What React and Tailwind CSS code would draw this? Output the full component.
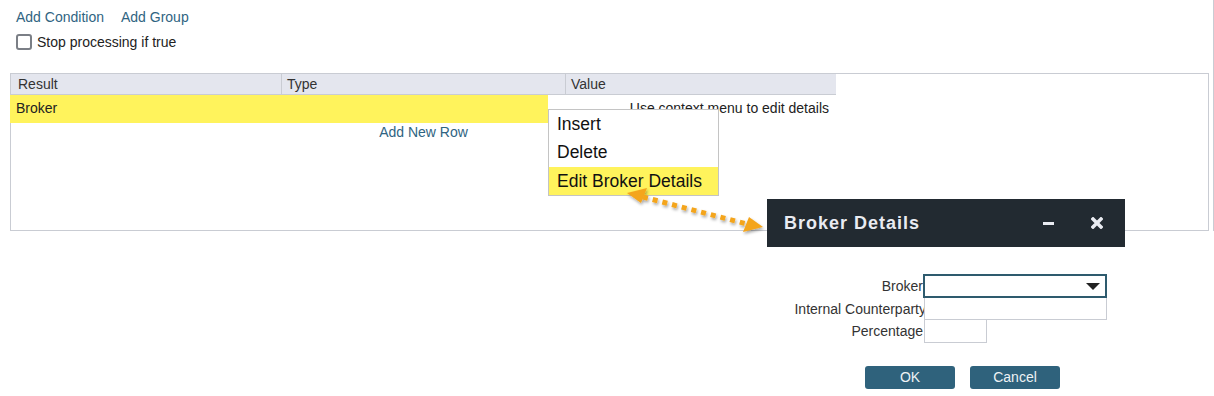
import React from 'react';

const Arrow = () => (
    <svg className="absolute left-0 top-0 pointer-events-none" width="1214" height="396">
        <defs>
            <filter id="sh" x="-20%" y="-50%" width="140%" height="200%">
                <feDropShadow dx="1" dy="2" stdDeviation="1.5" floodColor="#000" floodOpacity="0.35" />
            </filter>
        </defs>
        <g filter="url(#sh)">
            <line x1="643" y1="197" x2="747" y2="224" stroke="#f4a51c" strokeWidth="5" strokeDasharray="5 5" />
            <polygon points="627,193 647,188 641,203" fill="#f4a51c" />
            <polygon points="763,227 743,232 749,217" fill="#f4a51c" />
        </g>
    </svg>
);

const App = () => {
    return (
        <div className="relative w-[1214px] h-[396px] bg-white overflow-hidden font-['Liberation_Sans',Arial,sans-serif] text-[14px] text-[#333]">
            {/*============== rule panel ========= */}
            <div className="h-[231px] border-r border-[#c9ccd3] pt-[9px]">
                <div className="flex gap-[17px] pl-[16px] leading-[17px] text-[#2f6482]">
                    <span>Add Condition</span>
                    <span>Add Group</span>
                </div>
                <div className="flex items-center pl-[16px] mt-[8px] h-[16px]">
                    <div className="w-[16px] h-[16px] border-2 border-[#7b7f86] rounded-[3px]"></div>
                    <span className="ml-[5px] text-[#222]">Stop processing if true</span>
                </div>

                {/* grid box */}
                <div className="ml-[10px] mt-[23px] w-[1199px] h-[158px] border border-[#c9ccd3]">
                    <div className="flex w-[825px] h-[21px] bg-[#e4e6ee] border-b border-[#c9ccd3] leading-[20px]">
                        <div className="w-[271px] pl-[7px] border-r border-[#c9ccd3]">Result</div>
                        <div className="w-[284px] pl-[5px] border-r border-[#c9ccd3]">Type</div>
                        <div className="w-[270px] pl-[5px]">Value</div>
                    </div>
                    <div className="flex w-[825px] h-[28px] -ml-px">
                        <div className="w-[538px] bg-[#fff35c] pl-[6px] leading-[26px] text-[#222]">Broker</div>
                        <div className="flex-1 text-right pr-[6px] leading-[26px] text-[#222]">Use context menu to edit details</div>
                    </div>
                    <div className="w-[825px] text-center text-[#2f6482] leading-[18px]">Add New Row</div>
                </div>
            </div>

            {/* context menu */}
            <div className="absolute left-[548px] top-[109px] w-[171px] h-[87px] bg-white border border-[#c4c4c4] text-[17.5px] text-[#111]">
                <div className="h-[28px] leading-[28px] pl-[8px]">Insert</div>
                <div className="h-[28px] leading-[28px] pl-[8px]">Delete</div>
                <div className="h-[28px] leading-[28px] pl-[8px] mt-px bg-[#fff35c]">Edit Broker Details</div>
            </div>

            <Arrow />

            {/* broker details dialog */}
            <div className="absolute left-[767px] top-[199px] w-[358px]">
                <div className="flex items-center h-[48px] bg-[#222a31] pl-[17px] pr-[22px] text-[#e9ebf1]">
                    <span className="flex-1 text-[18px] font-bold tracking-[1px]">Broker Details</span>
                    <span className="w-[11px] h-[3px] bg-[#e9ebf1] mr-[37px]"></span>
                    <svg width="12" height="12" viewBox="0 0 12 12">
                        <path d="M2 2 L10 10 M10 2 L2 10" stroke="#e9ebf1" strokeWidth="3.5" strokeLinecap="square" />
                    </svg>
                </div>
                <div className="pt-[27px] grid grid-cols-[156px_1fr] leading-[20px]">
                    <div className="text-right h-[24px] leading-[24px]">Broker</div>
                    <div className="w-[184px] h-[24px] border-2 border-[#2e5b6e] flex items-center justify-end pr-[5px]">
                        <svg width="14" height="7" viewBox="0 0 14 7">
                            <polygon points="0,0 14,0 7,7" fill="#222" />
                        </svg>
                    </div>
                    <div className="text-right h-[22px] leading-[22px] -mr-[3px] whitespace-nowrap">Internal Counterparty</div>
                    <div className="relative w-[183px] h-[22px] border border-t-0 border-[#c9ccd3] ml-px bg-white"></div>
                    <div className="text-right h-[23px] leading-[23px]">Percentage</div>
                    <div className="w-[63px] h-[23px] border border-t-0 border-[#c9ccd3] ml-px"></div>
                </div>
                <div className="flex gap-[15px] pl-[98px] mt-[23px]">
                    <button className="w-[90px] h-[23px] bg-[#2f627c] rounded-[3px] text-[#eef2f5] text-[14px]">OK</button>
                    <button className="w-[90px] h-[23px] bg-[#2f627c] rounded-[3px] text-[#eef2f5] text-[14px]">Cancel</button>
                </div>
            </div>
        </div>
    );
};

export default App;
